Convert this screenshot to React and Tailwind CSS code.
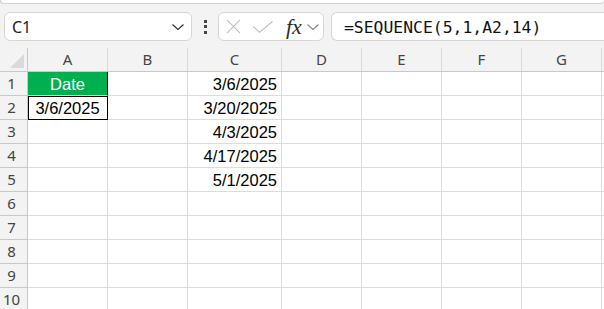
import React from 'react'

const ui = { fontFamily: '"Noto Sans", "Open Sans", sans-serif' }
const cellFont = { fontFamily: '"Liberation Sans", Arial, sans-serif' }
const mono = { fontFamily: '"DejaVu Sans Mono", "Liberation Mono", monospace' }

const columns = [
  { key: 'A', w: 'w-[80px]' },
  { key: 'B', w: 'w-[80px]' },
  { key: 'C', w: 'w-[94px]' },
  { key: 'D', w: 'w-[80px]' },
  { key: 'E', w: 'w-[80px]' },
  { key: 'F', w: 'w-[80px]' },
  { key: 'G', w: 'w-[80px]' },
  { key: 'H', w: 'w-[80px]', hidden: true },
]

const sequence = ['3/6/2025', '3/20/2025', '4/3/2025', '4/17/2025', '5/1/2025']

const Chevron = ({ className }) => (
  <svg viewBox="0 0 12 6" className={className} fill="none" stroke="currentColor" strokeWidth="1.2">
    <path d="M0.5 0.5 L6 5.5 L11.5 0.5" />
  </svg>
)

const FormulaBar = () => (
  <div className="flex h-[44px] items-start bg-[#f3f3f3] pt-[8px]" style={ui}>
    <div className="ml-[4px] flex h-[29px] w-[188px] items-center justify-between rounded-[6px] border border-[#d6d6d6] bg-white pl-[7px] pr-[7px]">
      <span className="text-[16px] text-[#222]">C1</span>
      <Chevron className="h-[6px] w-[12px] text-[#333]" />
    </div>
    <div className="flex h-[29px] w-[26px] flex-col items-center justify-center gap-[2.5px]">
      <span className="h-[3px] w-[3px] bg-[#444]" />
      <span className="h-[3px] w-[3px] bg-[#444]" />
      <span className="h-[3px] w-[3px] bg-[#444]" />
    </div>
    <div className="flex h-[29px] w-[106px] items-center rounded-[6px] border border-[#d6d6d6] bg-white pl-[7px]">
      <svg viewBox="0 0 16 16" className="h-[15px] w-[15px] text-[#bdbdbd]" fill="none" stroke="currentColor" strokeWidth="1.1">
        <path d="M1 1 L15 15 M15 1 L1 15" />
      </svg>
      <svg viewBox="0 0 20 12" className="ml-[12px] h-[12px] w-[20px] text-[#bdbdbd]" fill="none" stroke="currentColor" strokeWidth="1.1">
        <path d="M0.5 5.5 L6.5 11.3 L19.5 0.5" />
      </svg>
      <span className="ml-[13px] text-[22px] italic leading-none text-[#2b2b2b]" style={{ fontFamily: '"Liberation Serif", "DejaVu Serif", serif' }}>
        fx
      </span>
      <Chevron className="ml-[5px] h-[6px] w-[12px] text-[#8a8a8a]" />
    </div>
    <div className="ml-[7px] flex h-[29px] flex-1 items-center rounded-l-[6px] border border-r-0 border-[#d6d6d6] bg-white pl-[12px] pt-[3px]">
      <span className="text-[16.4px] text-[#111]" style={mono}>=SEQUENCE(5,1,A2,14)</span>
    </div>
  </div>
)

const HeaderRow = () => (
  <div className="flex h-[24px] border-b border-[#c8c8c8] bg-[#f3f3f3]" style={ui}>
    <div className="relative w-[28px] shrink-0 border-r border-[#c8c8c8]">
      <svg viewBox="0 0 10 10" className="absolute bottom-[3px] right-[3px] h-[14px] w-[14px] text-[#dadada]" fill="currentColor">
        <path d="M10 0 L10 10 L0 10 Z" />
      </svg>
    </div>
    {columns.map(c => (
      <div
        key={c.key}
        className={`${c.w} flex shrink-0 items-center justify-center border-r border-[#d9d9d9] text-[15px] text-[#444]`}
      >
        {c.hidden ? '' : c.key}
      </div>
    ))}
  </div>
)

const cellContent = (row, col) => {
  if (col === 'A' && row === 1) return { text: 'Date', cls: 'bg-[#00b050] text-white justify-center border-r-black' }
  if (col === 'A' && row === 2) return { text: '3/6/2025', cls: 'justify-center outline outline-[1.5px] outline-black -outline-offset-1 z-10' }
  if (col === 'C' && row <= 5) return { text: sequence[row - 1], cls: 'justify-end pr-[4px]' }
  return { text: '', cls: '' }
}

const Row = ({ n }) => (
  <div className="flex h-[24px]">
    <div
      className="flex w-[28px] shrink-0 items-center justify-center border-b border-r border-[#c8c8c8] bg-[#f3f3f3] pr-[4px] text-[15px] text-[#444]"
      style={ui}
    >
      {n}
    </div>
    {columns.map(c => {
      const cell = cellContent(n, c.key)
      return (
        <div
          key={c.key}
          className={`${c.w} relative flex shrink-0 items-center border-b border-r border-[#dcdcdc] pt-px text-[16.5px] text-black ${cell.cls}`}
          style={cellFont}
        >
          {cell.text}
        </div>
      )
    })}
  </div>
)

export default function App() {
  return (
    <div className="h-[309px] w-[604px] overflow-hidden bg-white">
      <div className="bg-[#f3f3f3]">
        <div className="h-[4px] rounded-b-[6px] border-b border-l border-[#d3d3d3] bg-white shadow-[0_1px_2px_rgba(0,0,0,0.08)]" />
      </div>
      <FormulaBar />
      <HeaderRow />
      {[1, 2, 3, 4, 5, 6, 7, 8, 9, 10].map(n => (
        <Row key={n} n={n} />
      ))}
    </div>
  )
}
